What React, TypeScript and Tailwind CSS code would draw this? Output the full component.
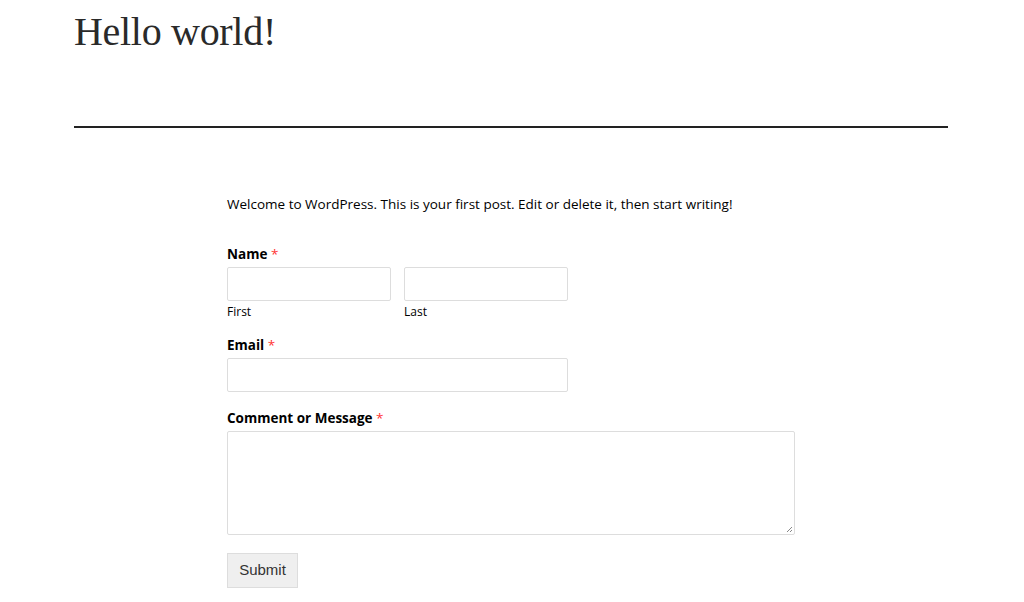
export default function App() {
  const label = "block text-[13.5px] font-bold text-black leading-[20px]";
  const input = "block h-[34px] border border-[#dddddd] rounded-[2px] bg-white";
  return (
    <div className="w-[1024px] h-[602px] bg-white overflow-hidden" style={{ fontFamily: '"Open Sans", sans-serif' }}>
      <div className="px-[74px] pt-[6px]">
        <h1 className="text-[40px] leading-[52px] text-[#2a2a2a] font-light tracking-[-0.3px]" style={{ fontFamily: '"Liberation Serif", serif' }}>Hello world!</h1>
        <div className="mt-[68px] h-[2px] w-[874px] bg-[#222222]"></div>
      </div>
      <div className="ml-[227px] w-[568px] pt-[66px]">
        <p className="text-[13.5px] leading-[20px] text-black">Welcome to WordPress. This is your first post. Edit or delete it, then start writing!</p>
        <div className="mt-[30px]">
          <span className={label}>Name <span className="text-[#ff3333] font-normal">*</span></span>
          <div className="flex gap-[13px] mt-[3px]">
            <div className="w-[164px]">
              <div className={input + " w-[164px]"}></div>
              <div className="text-[12px] leading-[16px] mt-[3px] text-black">First</div>
            </div>
            <div className="w-[164px]">
              <div className={input + " w-[164px]"}></div>
              <div className="text-[12px] leading-[16px] mt-[3px] text-black">Last</div>
            </div>
          </div>
        </div>
        <div className="mt-[15px]">
          <span className={label}>Email <span className="text-[#ff3333] font-normal">*</span></span>
          <div className={input + " w-[341px] mt-[3px]"}></div>
        </div>
        <div className="mt-[16px]">
          <span className={label}>Comment or Message <span className="text-[#ff3333] font-normal">*</span></span>
          <div className="relative mt-[3px] h-[104px] w-[568px] border border-[#dddddd] rounded-[2px] bg-white">
            <svg className="absolute right-[1px] bottom-[1px]" width="8" height="8" viewBox="0 0 8 8">
              <path d="M7 2 L2 7 M7 5 L5 7" stroke="#888" strokeWidth="1" />
            </svg>
          </div>
        </div>
        <button className="mt-[18px] h-[35px] w-[71px] border border-[#dddddd] bg-[#efefef] text-[15px] text-[#333333]" style={{ fontFamily: '"Liberation Sans", sans-serif' }}>Submit</button>
      </div>
    </div>
  );
}
